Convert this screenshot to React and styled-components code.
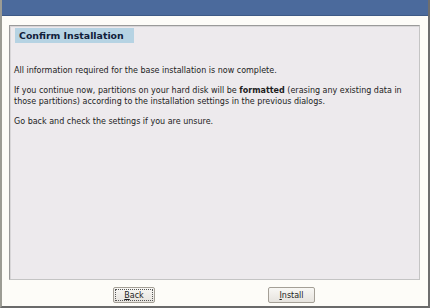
import React from "react";
import styled, { createGlobalStyle } from "styled-components";

const GlobalStyle = createGlobalStyle`
  html, body {
    margin: 0;
    padding: 0;
    background: #fdfcf8;
  }
`;

const Frame = styled.div`
  width: 430px;
  height: 308px;
  box-sizing: border-box;
  display: flex;
  flex-direction: column;
  background: #fdfcf8;
  border-left: 2px solid #9c9c94;
  border-right: 2px solid #6e6e6e;
  border-bottom: 2px solid #6a6a6a;
  font-family: "DejaVu Sans", "Liberation Sans", sans-serif;
  overflow: hidden;
`;

const TopBar = styled.div`
  height: 15px;
  background: #4b6a9c;
  border-bottom: 1px solid #3e5a86;
  flex-shrink: 0;
`;

const Body = styled.div`
  flex: 1;
  display: flex;
  flex-direction: column;
  padding: 9px 8px 0 7px;
`;

const Panel = styled.div`
  height: 255px;
  flex-shrink: 0;
  box-sizing: border-box;
  background: #edeaed;
  border-top: 1px solid #9a9a9a;
  border-left: 1px solid #9a9a9a;
  border-right: 1px solid #c4c4c4;
  border-bottom: 1px solid #c4c4c4;
  box-shadow: inset 1px 1px 0 #d8d6d8;
  padding: 2px 4px 0 4px;
`;

const Title = styled.div`
  width: fit-content;
  background: #b6d3e3;
  color: #10203a;
  font-weight: bold;
  font-size: 9.4px;
  line-height: 15px;
  padding: 0 10px 0 4px;
  margin-left: 1px;
`;

const Text = styled.p`
  margin: 0 0 9.5px 0;
  font-size: 8px;
  line-height: 10.5px;
  color: #1c1c1c;

  &:first-of-type {
    margin-top: 23px;
  }

  b {
    font-weight: bold;
  }
`;

const ButtonRow = styled.div`
  display: flex;
  padding: 7px 0 0 104px;
  gap: 113px;
`;

const Button = styled.button`
  box-sizing: border-box;
  width: ${(p) => p.$w}px;
  height: 16px;
  padding: 0;
  font-family: "DejaVu Sans", "Liberation Sans", sans-serif;
  font-size: 8px;
  color: #1c1c1c;
  background: linear-gradient(#f8f7f4, #e6e3de);
  border: 1px solid #a49f96;
  border-radius: 2px;
  position: relative;

  ${(p) =>
    p.$focus &&
    `
    &::after {
      content: "";
      position: absolute;
      inset: 1px;
      border: 1px dotted #555;
    }
  `}

  u {
    text-decoration: underline;
  }
`;

export default function App() {
  return (
    <>
      <GlobalStyle />
      <Frame>
        <TopBar />
        <Body>
          <Panel>
            <Title>Confirm Installation</Title>
            <Text>All information required for the base installation is now complete.</Text>
            <Text>
              If you continue now, partitions on your hard disk will be <b>formatted</b> (erasing any existing data in
              those partitions) according to the installation settings in the previous dialogs.
            </Text>
            <Text>Go back and check the settings if you are unsure.</Text>
          </Panel>
          <ButtonRow>
            <Button $w={42} $focus>
              <u>B</u>ack
            </Button>
            <Button $w={47}>
              <u>I</u>nstall
            </Button>
          </ButtonRow>
        </Body>
      </Frame>
    </>
  );
}
